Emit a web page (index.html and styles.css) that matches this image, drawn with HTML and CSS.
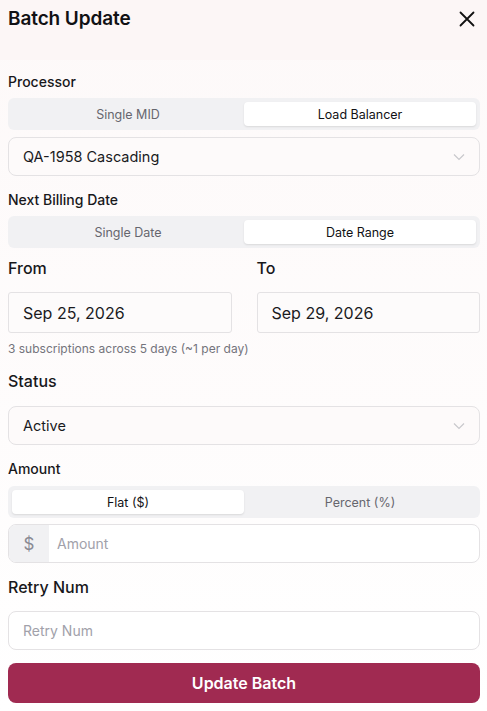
FILE: index.html
```html
<!DOCTYPE html>
<html lang="en">
<head>
<meta charset="utf-8">
<title>Batch Update</title>
<link rel="stylesheet" href="styles.css">
</head>
<body>
<div class="panel">
  <header class="header">
    <h1 class="title">Batch Update</h1>
    <button class="close" aria-label="Close">
      <svg width="16" height="16" viewBox="0 0 16 16"><path d="M1.5 1.5 L14.5 14.5 M14.5 1.5 L1.5 14.5" stroke="#111" stroke-width="1.8" stroke-linecap="round" fill="none"/></svg>
    </button>
  </header>
  <main class="body">
    <div class="label sm mt-12">Processor</div>
    <div class="seg mt-6">
      <div class="tab">Single MID</div>
      <div class="tab active">Load Balancer</div>
    </div>
    <div class="field select mt-7">
      <span class="value">QA-1958 Cascading</span>
      <svg class="chev" width="12" height="8" viewBox="0 0 12 8"><path d="M1 1.5 L6 6.5 L11 1.5" stroke="#c8c8cc" stroke-width="1.2" fill="none"/></svg>
    </div>

    <div class="label sm mt-14">Next Billing Date</div>
    <div class="seg mt-6">
      <div class="tab">Single Date</div>
      <div class="tab active">Date Range</div>
    </div>
    <div class="range mt-8">
      <div class="col">
        <div class="label lg">From</div>
        <div class="field date mt-12"><span class="value lgv">Sep 25, 2026</span></div>
      </div>
      <div class="col">
        <div class="label lg">To</div>
        <div class="field date mt-12"><span class="value lgv">Sep 29, 2026</span></div>
      </div>
    </div>
    <div class="help mt-8">3 subscriptions across 5 days (~1 per day)</div>

    <div class="label lg mt-12">Status</div>
    <div class="field select mt-13">
      <span class="value">Active</span>
      <svg class="chev" width="12" height="8" viewBox="0 0 12 8"><path d="M1 1.5 L6 6.5 L11 1.5" stroke="#c8c8cc" stroke-width="1.2" fill="none"/></svg>
    </div>

    <div class="label sm mt-14">Amount</div>
    <div class="seg mt-7">
      <div class="tab active">Flat ($)</div>
      <div class="tab">Percent (%)</div>
    </div>
    <div class="field addon-field mt-6">
      <span class="addon">$</span>
      <span class="value ph">Amount</span>
    </div>

    <div class="label lg mt-12">Retry Num</div>
    <div class="field input mt-12"><span class="value ph">Retry Num</span></div>

    <button class="submit mt-13">Update Batch</button>
  </main>
</div>
</body>
</html>
```

FILE: styles.css
```css
* { box-sizing: border-box; }
html, body { margin: 0; padding: 0; }
body {
  font-family: Inter, "Noto Sans", "Liberation Sans", sans-serif;
  color: #111114;
  background: #ffffff;
}
.panel {
  width: 487px;
  min-height: 711px;
  background: linear-gradient(#fdf9f9, #fefcfc 60%, #ffffff);
}
.header {
  height: 60px;
  background: #fcf6f6;
  display: flex;
  align-items: flex-start;
  justify-content: space-between;
  padding: 7px 12px 0 8px;
}
.title {
  margin: 0;
  font-size: 19px;
  line-height: 24px;
  font-weight: 600;
  letter-spacing: -0.1px;
}
.close {
  border: 0;
  background: transparent;
  padding: 0;
  margin-top: 4px;
  width: 16px;
  height: 16px;
  display: flex;
}
.body { padding: 0 7px 0 8px; }
.mt-6 { margin-top: 6px; }
.mt-7 { margin-top: 7px; }
.mt-8 { margin-top: 8px; }
.mt-12 { margin-top: 12px; }
.mt-13 { margin-top: 13px; }
.mt-14 { margin-top: 14px; }
.label { font-weight: 500; color: #18181b; }
.label.sm { font-size: 14px; line-height: 20px; }
.label.lg { font-size: 16px; line-height: 24px; }
.seg {
  height: 32px;
  background: #f1f1f3;
  border-radius: 6px;
  padding: 4px;
  display: grid;
  grid-template-columns: 1fr 1fr;
}
.tab {
  display: flex;
  align-items: center;
  justify-content: center;
  font-size: 12.5px;
  color: #66666e;
  border-radius: 4px;
  height: 24px;
}
.tab.active {
  background: #ffffff;
  color: #111114;
  font-weight: 400;
  box-shadow: 0 1px 2px rgba(0,0,0,0.1);
}
.field {
  display: flex;
  align-items: center;
  border: 1px solid #e4e2e4;
  border-radius: 8px;
  height: 39px;
}
.select, .input { padding: 0 14px 0 14px; justify-content: space-between; }
.select { background: #fdfafa; }
.input { background: #ffffff; }
.value { font-size: 14.5px; color: #1a1a1e; }
.value.lgv { font-size: 16px; }
.value.ph { color: #a1a1aa; font-size: 14px; }
.range {
  display: grid;
  grid-template-columns: 1fr 1fr;
  gap: 25px;
}
.date {
  height: 41px;
  padding: 0 14px;
  background: #fdfbfb;
  border-radius: 3px;
}
.help {
  font-size: 12px;
  line-height: 16px;
  color: #74747c;
}
.addon-field { background: #fff; overflow: hidden; }
.addon {
  width: 40px;
  height: 100%;
  background: #f1f1f3;
  display: flex;
  align-items: center;
  justify-content: center;
  color: #8a8a93;
  font-size: 17px;
}
.addon-field .value { padding-left: 8px; }
.submit {
  display: block;
  width: 100%;
  height: 40px;
  border: 0;
  border-radius: 8px;
  background: #a02a51;
  color: #fff;
  font-family: inherit;
  font-size: 16px;
  font-weight: 600;
}
```
